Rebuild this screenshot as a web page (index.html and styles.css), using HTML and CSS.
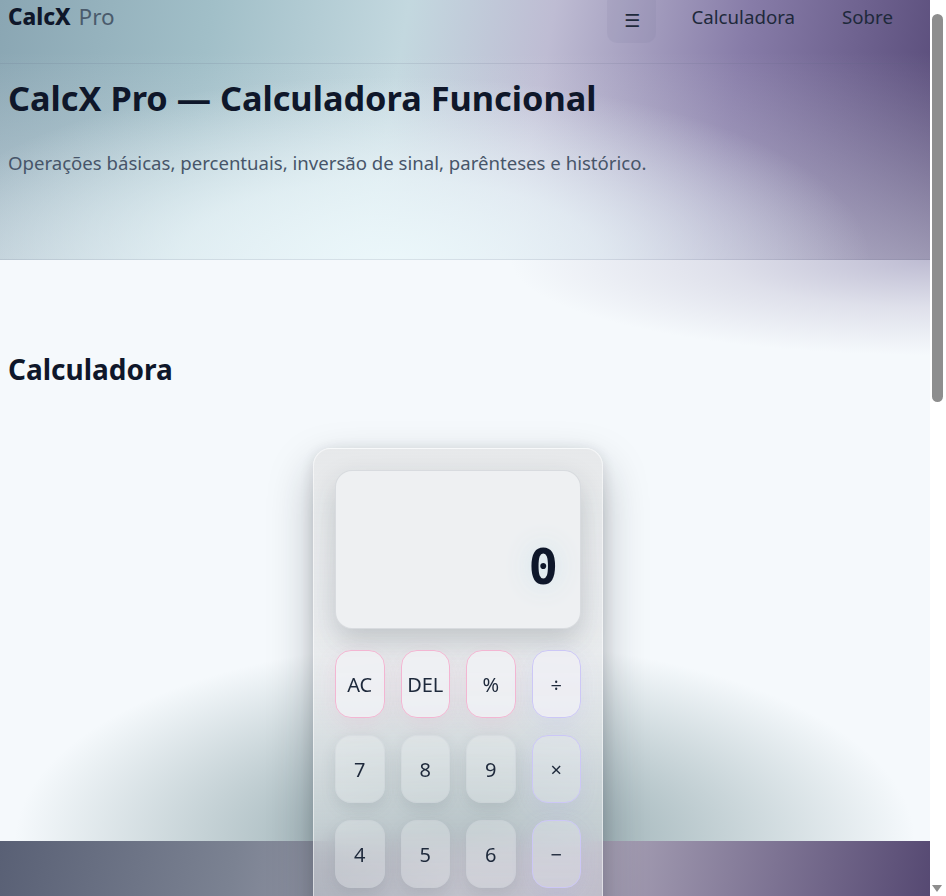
FILE: index.html
```html
<!DOCTYPE html>
<html lang="pt-BR">
<head>
<meta charset="utf-8">
<title>CalcX Pro — Calculadora Funcional</title>
<link rel="stylesheet" href="styles.css">
</head>
<body>
<div class="top">
  <header class="site-header">
    <a class="brand" href="#"><strong>CalcX</strong> <span>Pro</span></a>
    <nav class="nav">
      <button class="menu-btn" type="button" aria-label="Menu">☰</button>
      <a class="nav-link" href="#calc">Calculadora</a>
      <a class="nav-link" href="#sobre">Sobre</a>
    </nav>
  </header>
  <section class="hero">
    <h1>CalcX Pro — Calculadora Funcional</h1>
    <p class="lead">Operações básicas, percentuais, inversão de sinal, parênteses e histórico.</p>
  </section>
</div>
<main class="main" id="calc">
  <h2>Calculadora</h2>
  <div class="calc">
    <div class="display"><span class="value">0</span></div>
    <div class="keys">
      <button class="key fn">AC</button>
      <button class="key fn">DEL</button>
      <button class="key fn">%</button>
      <button class="key op">÷</button>
      <button class="key">7</button>
      <button class="key">8</button>
      <button class="key">9</button>
      <button class="key op">×</button>
      <button class="key">4</button>
      <button class="key">5</button>
      <button class="key">6</button>
      <button class="key op">−</button>
      <button class="key">1</button>
      <button class="key">2</button>
      <button class="key">3</button>
      <button class="key op">+</button>
    </div>
  </div>
</main>
<footer class="site-footer" id="sobre">
  <p>CalcX Pro</p>
</footer>
<div class="scrollbar" aria-hidden="true">
  <div class="scroll-thumb"></div>
  <div class="scroll-arrow"></div>
</div>
</body>
</html>
```
FILE: styles.css
```css
html {
  background: #ffffff;
}
html, body {
  padding: 0;
  margin: 0;
}
body {
  margin-right: 16px;
  font-family: "Noto Sans", "Open Sans", sans-serif;
  color: #0f172a;
  background: #f5f9fc;
}
.scrollbar {
  position: fixed;
  top: 0;
  right: 0;
  bottom: 0;
  width: 16px;
  background: #ffffff;
  display: flex;
  flex-direction: column;
  align-items: center;
  justify-content: space-between;
  padding: 14px 0 4px;
  box-sizing: border-box;
  z-index: 10;
}
.scroll-thumb {
  width: 11px;
  height: 388px;
  margin-left: -1px;
  border-radius: 6px;
  background: #8e8e8e;
}
.scroll-arrow {
  width: 0;
  height: 0;
  margin-left: -2px;
  border-left: 5px solid transparent;
  border-right: 5px solid transparent;
  border-top: 7px solid #8e8e8e;
}
.top {
  background:
    radial-gradient(ellipse 600px 230px at 42% 100%, rgba(236,248,251,0.95) 0%, rgba(236,248,251,0.7) 35%, rgba(236,248,251,0) 80%),
    linear-gradient(to bottom, rgba(228,236,242,0) 20%, rgba(228,232,240,0.5) 100%),
    linear-gradient(100deg, #8aa6b3 0%, #a1bfc8 22%, #c3d8df 42%, #bebcd3 57%, #877ca8 77%, #564977 100%);
}
.site-header {
  height: 64px;
  box-sizing: border-box;
  padding: 0 8px;
  display: flex;
  justify-content: space-between;
  align-items: flex-start;
  border-bottom: 1px solid rgba(90, 100, 130, 0.14);
}
.brand {
  text-decoration: none;
  font-size: 22.5px;
  line-height: 34px;
  color: #0f172a;
}
.brand strong { font-weight: 800; }
.brand span { color: #4a5b6c; font-weight: 400; margin-left: 2px; }
.nav {
  display: flex;
  align-items: flex-start;
}
.menu-btn {
  width: 49px;
  height: 51px;
  margin-top: -8px;
  border: 0;
  border-radius: 10px;
  background: rgba(110, 110, 150, 0.1);
  font-size: 18px;
  color: #1e293b;
  padding-top: 6px;
  font-family: "DejaVu Sans", sans-serif;
  margin-right: 35px;
}
.nav-link {
  text-decoration: none;
  color: #1e293b;
  font-size: 18.7px;
  line-height: 34px;
}
.nav-link + .nav-link { margin-left: 47px; margin-right: 29px; }
.hero {
  padding: 12px 8px 0;
  height: 196px;
  box-sizing: border-box;
  border-bottom: 1px solid rgba(90, 100, 130, 0.14);
}
.hero h1 {
  margin: 0;
  font-size: 34.3px;
  line-height: 44px;
  font-weight: 700;
  color: #0f172a;
}
.lead {
  margin: 30px 0 0;
  font-size: 18.6px;
  line-height: 26px;
  color: #475569;
}
.main {
  padding: 89px 22px 0 8px;
  height: 581px;
  box-sizing: border-box;
  background:
    radial-gradient(ellipse 450px 200px at 50% 100%, rgba(122,147,153,0.92) 0%, rgba(148,170,175,0.65) 45%, rgba(245,249,252,0) 100%),
    radial-gradient(ellipse 420px 95px at 100% 0%, rgba(160,155,188,0.65) 0%, rgba(165,160,190,0.28) 50%, rgba(245,249,252,0) 100%),
    #f5f9fc;
}
.main h2 {
  margin: 0;
  font-size: 28px;
  line-height: 40px;
  font-weight: 700;
  color: #0f172a;
}
.calc {
  position: relative;
  z-index: 1;
  width: 290px;
  margin: 59px auto 0;
  box-sizing: border-box;
  padding: 21px 21px 24px;
  border-radius: 18px;
  border: 1px solid rgba(255,255,255,0.5);
  background: linear-gradient(180deg, rgba(230,232,234,0.96) 0%, rgba(228,230,232,0.7) 40%, rgba(220,226,228,0.3) 100%);
  backdrop-filter: blur(14px);
  box-shadow: 0 20px 45px rgba(20, 30, 40, 0.28), 0 2px 16px rgba(20,30,40,0.12);
}
.display {
  height: 159px;
  border-radius: 17px;
  background: #eef0f2;
  border: 1px solid rgba(210, 214, 218, 0.8);
  box-sizing: border-box;
  box-shadow: 0 12px 28px rgba(30, 40, 50, 0.2);
  display: flex;
  align-items: center;
  justify-content: flex-end;
  padding: 36px 22px 0;
}
.value {
  font-family: "DejaVu Sans Mono", "Liberation Mono", monospace;
  font-weight: 700;
  font-size: 49px;
  color: #0f172a;
  text-shadow: 0 0 26px rgba(200, 225, 235, 0.9);
}
.keys {
  margin-top: 21px;
  display: grid;
  grid-template-columns: repeat(4, 1fr);
  column-gap: 16px;
  row-gap: 17px;
}
.key {
  height: 68px;
  border-radius: 16px;
  border: 1px solid rgba(200, 205, 210, 0.25);
  background: rgba(245, 247, 249, 0.25);
  box-shadow: 0 6px 16px rgba(40, 50, 60, 0.1);
  font-family: "Noto Sans", "Open Sans", sans-serif;
  font-size: 20px;
  color: #1e293b;
  padding: 0;
}
.key.fn {
  border-color: #f3b6d2;
  background: rgba(240, 241, 244, 0.85);
  box-shadow: 0 6px 22px rgba(236, 120, 170, 0.12);
}
.key.op {
  border-color: #ccc7f6;
  background: rgba(236, 237, 245, 0.3);
  box-shadow: 0 6px 22px rgba(150, 140, 240, 0.12);
}
.key.fn + .key.op { background: rgba(238, 239, 245, 0.85); }
.site-footer {
  height: 120px;
  background: linear-gradient(100deg, #596075 0%, #7b8292 25%, #a9a8b7 48%, #aca6b9 62%, #7d7393 82%, #534670 100%);
  margin: 0;
  color: transparent;
}
.site-footer p { margin: 0; padding: 20px 8px; }
```
